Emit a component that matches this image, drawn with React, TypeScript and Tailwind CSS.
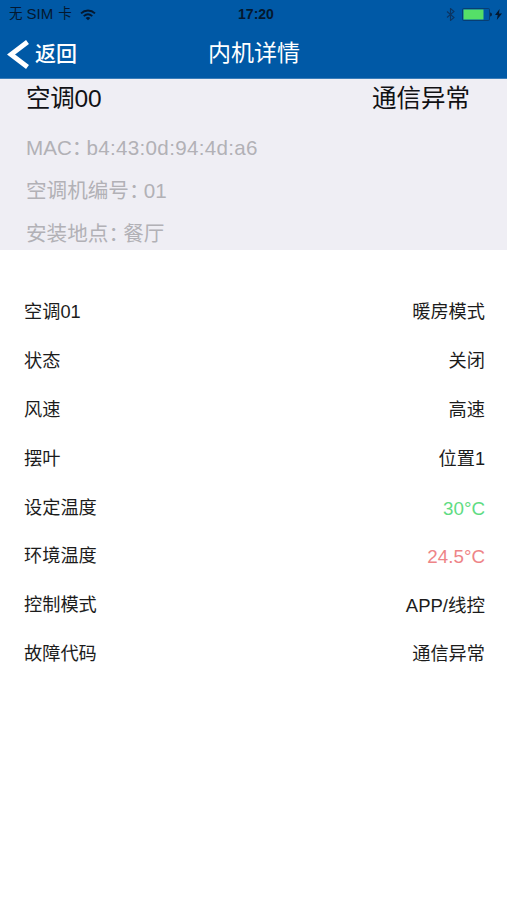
import React from "react";

const details = [
  { label: "空调01", value: "暖房模式", tone: "text-[#1c1c1c]" },
  { label: "状态", value: "关闭", tone: "text-[#1c1c1c]" },
  { label: "风速", value: "高速", tone: "text-[#1c1c1c]" },
  { label: "摆叶", value: "位置1", tone: "text-[#1c1c1c]" },
  { label: "设定温度", value: "30°C", tone: "text-[18.8px] text-[#5fdc83]" },
  { label: "环境温度", value: "24.5°C", tone: "text-[18.8px] text-[#ee8487]" },
  { label: "控制模式", value: "APP/线控", tone: "text-[18.5px] text-[#1c1c1c]" },
  { label: "故障代码", value: "通信异常", tone: "text-[#1c1c1c]" },
];

const info = [
  { label: "MAC", value: "b4:43:0d:94:4d:a6", tracking: "tracking-[0.3px]" },
  { label: "空调机编号", value: "01", tracking: "tracking-normal" },
  { label: "安装地点", value: "餐厅", tracking: "tracking-normal" },
];

function WifiIcon() {
  return (
    <svg className="ml-[8px] h-[12px] w-[16px]" viewBox="0 0 16 12" fill="none" stroke="#04182f">
      <path d="M1 4.4C5 .6 11 .6 15 4.4" strokeWidth="1.9" />
      <path d="M3.7 7.1c2.6-2.3 6-2.3 8.6 0" strokeWidth="1.8" />
      <path d="M8 11.3 5.6 9a3.6 3.6 0 0 1 4.8 0z" fill="#04182f" stroke="none" />
    </svg>
  );
}

function StatusBar() {
  return (
    <div className="grid h-[28px] grid-cols-3 items-center pl-[9px] pr-[5px] text-[15px] text-[#04182f]">
      <div className="flex items-center whitespace-nowrap pt-px">
        <span className="text-[13.5px]">无</span>
        <span className="ml-[4px]">SIM</span>
        <span className="ml-[5px] text-[13.5px]">卡</span>
        <WifiIcon />
      </div>
      <div className="pl-[1px] text-center text-[14px] font-bold">17:20</div>
      <div className="flex items-center justify-end">
        <svg className="h-[13px] w-[9px] shrink-0" viewBox="0 0 9 13" fill="none" stroke="#0b3562" strokeWidth="1.1">
          <path d="M1 3.5 8 9.5 4.5 12.5V.5L8 3.5 1 9.5" />
        </svg>
        <svg className="ml-[7px] h-[13px] w-[30px] shrink-0" viewBox="0 0 30 13">
          <rect x=".5" y=".5" width="27" height="12" rx="1.2" fill="none" stroke="#083e72" />
          <rect x="1.5" y="1.5" width="20" height="10" fill="#55df68" />
          <path d="M28.2 4.5c2.2.6 2.2 3.4 0 4z" fill="#04182f" />
        </svg>
        <svg className="ml-[3px] h-[11px] w-[7px] shrink-0" viewBox="0 0 7 11" fill="#04182f">
          <path d="M4.6 0 0 6.1h2.7L1.8 11 7 4.5H4z" />
        </svg>
      </div>
    </div>
  );
}

export default function App() {
  return (
    <div className="h-[900px] w-[507px] overflow-hidden bg-white font-['Liberation_Sans','Noto_Sans_CJK_SC',sans-serif]">
      <header className="h-[79px] border-b border-[#3a7db9] bg-[#0059a6]">
        <StatusBar />
        <div className="grid h-[50px] grid-cols-[1fr_auto_1fr] items-center text-white">
          <button className="flex items-center pl-[7px]">
            <svg className="mt-[3px] h-[29px] w-[23px]" viewBox="0 0 23 29" fill="none" stroke="white" strokeWidth="4.8">
              <path d="M20.5 2 4 14.5 20.5 27" />
            </svg>
            <span className="ml-[5px] mt-[2px] text-[21px] font-medium leading-[30px]">返回</span>
          </button>
          <h1 className="pl-[1px] text-[23px] leading-[30px]">内机详情</h1>
        </div>
      </header>

      <section className="h-[171px] bg-[#efeef4] pl-[26px] pr-[37px]">
        <div className="flex h-[39px] items-center justify-between text-[24.5px] leading-[37px] text-[#111114]">
          <span className="tracking-[-0.2px]">空调00</span>
          <span>通信异常</span>
        </div>
        <dl className="mt-[8px] text-[20.6px] leading-[43px] text-[#b2b1b6]">
          {info.map((item) => (
            <div key={item.label} className="flex h-[43px] items-center">
              <dt>
                {item.label}
                <span className="tracking-[-5.8px]">：</span>
              </dt>
              <dd className={item.tracking}>{item.value}</dd>
            </div>
          ))}
        </dl>
      </section>

      <dl className="mt-[38px] pl-[24px] pr-[22px] text-[18.2px]">
        {details.map((row) => (
          <div key={row.label} className="flex h-[48.9px] items-center justify-between leading-[27px]">
            <dt className="text-[#1c1c1c]">{row.label}</dt>
            <dd className={row.tone}>{row.value}</dd>
          </div>
        ))}
      </dl>
    </div>
  );
}
